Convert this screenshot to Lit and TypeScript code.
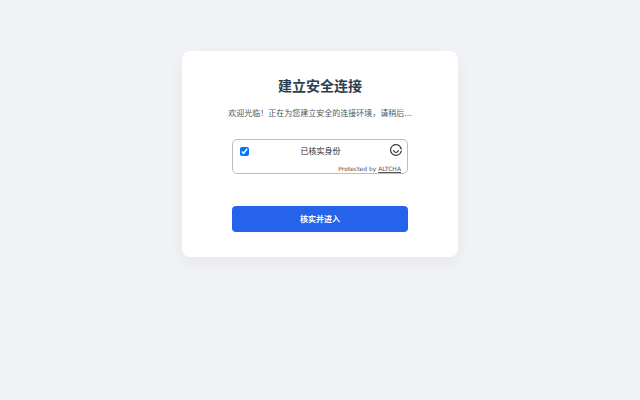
import { LitElement, html, css } from 'lit';
import { customElement, state } from 'lit/decorators.js';

@customElement('altcha-widget')
class AltchaWidget extends LitElement {
  @state()
  checked: boolean = true;

  static styles = css`
    :host {
      display: block;
      width: 100%;
    }
    .altcha {
      box-sizing: border-box;
      border: 1px solid #bcbdc0;
      border-radius: 5px;
      padding: 4px 5px 0 7px;
    }
    .main {
      display: flex;
      align-items: flex-start;
      gap: 4px;
    }
    input {
      width: 9px;
      height: 9px;
      margin: 3px 0;
      accent-color: #0075ff;
    }
    label {
      flex: 1;
      padding-left: 2px;
      text-align: center;
      font-size: 8px;
      line-height: 16px;
      color: #1f2328;
    }
    .logo {
      display: flex;
      color: #404040;
    }
    .logo svg {
      width: 12px;
      height: 12px;
    }
    .footer {
      text-align: right;
      font-size: 6px;
      line-height: 8px;
      padding: 5px 1px 0 0;
      color: #555;
    }
    a {
      color: inherit;
    }
  `;

  render() {
    return html`
      <div class="altcha">
        <div class="main">
          <input
            id="verify"
            type="checkbox"
            .checked=${this.checked}
            @change=${this.handleChange}
          />
          <label for="verify">已核实身份</label>
          <a class="logo" href="#" aria-label="ALTCHA">
            <svg viewBox="0 0 20 20" fill="currentColor">
              <path d="M2.34 16.43C5.89 20.66 12.2 21.21 16.43 17.66C18.47 15.95 19.65 13.59 19.94 11.14L17.99 10.43C17.87 12.56 16.91 14.65 15.14 16.13C11.76 18.97 6.71 18.53 3.87 15.14C1.03 11.76 1.47 6.71 4.86 3.87C8.24 1.03 13.29 1.47 16.13 4.86C16.6 5.42 16.98 6.02 17.27 6.65L15.2 7.3L19.95 9.01C19.76 7.08 19.01 5.18 17.66 3.57C14.11 -0.66 7.8 -1.21 3.57 2.34C-0.66 5.89 -1.21 12.2 2.34 16.43Z" />
              <path d="M13 10H15C15 12.76 12.76 15 10 15C7.24 15 5 12.76 5 10H7C7 11.66 8.34 13 10 13C11.66 13 13 11.66 13 10Z" />
            </svg>
          </a>
        </div>
        <div class="footer">Protected by <a href="#">ALTCHA</a></div>
      </div>
    `;
  }

  handleChange(e: Event) {
    this.checked = (e.target as HTMLInputElement).checked;
  }
}

@customElement('app-root')
class AppRoot extends LitElement {
  static styles = css`
    :host {
      display: flex;
      justify-content: center;
      box-sizing: border-box;
      min-height: 100vh;
      padding: 51px 16px;
      background: #f0f2f5;
      font-family: 'DejaVu Sans', 'Noto Sans CJK SC', sans-serif;
    }
    .card {
      box-sizing: border-box;
      width: 100%;
      max-width: 276px;
      align-self: flex-start;
      display: flex;
      flex-direction: column;
      align-items: center;
      padding: 25px;
      border-radius: 8px;
      background: #fff;
      box-shadow: 0 5px 15px rgba(0, 0, 0, 0.05);
      text-align: center;
    }
    h1 {
      margin: 0;
      font-size: 14px;
      line-height: 20px;
      font-weight: 700;
      color: #2c3e50;
    }
    p {
      margin: 10px 0 18px;
      font-size: 8px;
      line-height: 15px;
      color: #4b5563;
      white-space: nowrap;
    }
    form {
      display: flex;
      flex-direction: column;
      gap: 32px;
      width: 100%;
      max-width: 176px;
    }
    button {
      padding: 8px 8px 6px;
      border: 0;
      border-radius: 4px;
      background: #2563eb;
      color: #fff;
      font-family: inherit;
      font-size: 8px;
      line-height: 12px;
      font-weight: 700;
      cursor: pointer;
    }
  `;

  render() {
    return html`
      <main class="card">
        <h1>建立安全连接</h1>
        <p>欢迎光临！正在为您建立安全的连接环境，请稍后...</p>
        <form @submit=${this.handleSubmit}>
          <altcha-widget></altcha-widget>
          <button type="submit">核实并进入</button>
        </form>
      </main>
    `;
  }

  handleSubmit(e: Event) {
    e.preventDefault();
  }
}
